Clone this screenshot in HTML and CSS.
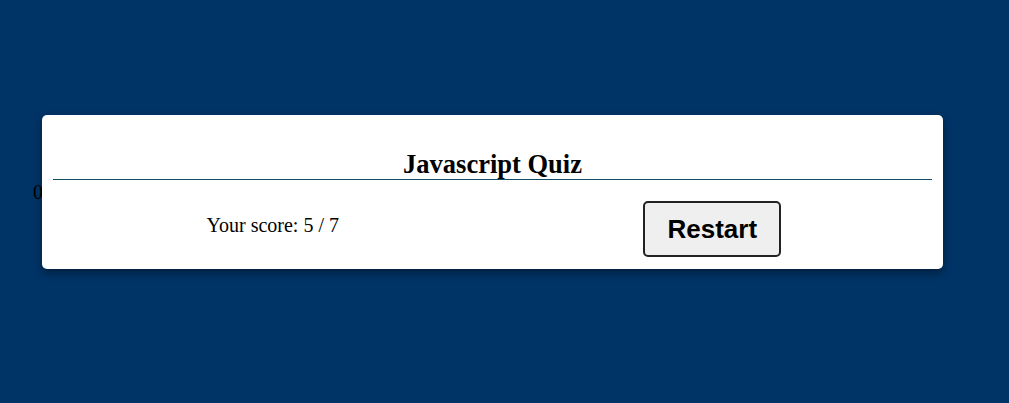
FILE: index.html
```html
<!DOCTYPE html>
<html lang="en">
<head>
<meta charset="utf-8">
<title>Javascript Quiz</title>
<link rel="stylesheet" href="styles.css">
</head>
<body>
<div class="page">
  <span class="counter">0</span>
  <div class="card">
    <h2 class="title">Javascript Quiz</h2>
    <div class="result-row">
      <div class="col">
        <p class="score">Your score: 5 / 7</p>
      </div>
      <div class="col">
        <button class="restart" type="button">Restart</button>
      </div>
    </div>
  </div>
</div>
</body>
</html>
```

FILE: styles.css
```css
html, body {
  margin: 0;
  padding: 0;
  background: #003366;
  font-family: "Liberation Serif", "Times New Roman", serif;
  color: #000;
}

.page {
  position: relative;
  width: 1009px;
  height: 403px;
  padding: 115px 0 0 42px;
  box-sizing: border-box;
}

.counter {
  position: absolute;
  left: 33px;
  top: 181px;
  font-size: 20px;
  line-height: 23px;
  color: #000;
}

.card {
  position: relative;
  z-index: 1;
  width: 901px;
  height: 154px;
  box-sizing: border-box;
  background: #fff;
  border-radius: 5px;
  padding: 15px 11px 11px;
  box-shadow: 0 4px 9px rgba(0, 0, 0, 0.4);
}

.title {
  margin: 19px 0 0;
  font-size: 26.5px;
  font-weight: bold;
  line-height: 30px;
  text-align: center;
  border-bottom: 1px solid #0f4d66;
}

.result-row {
  display: flex;
  align-items: flex-start;
}

.col {
  flex: 1;
  text-align: center;
}

.score {
  margin: 34px 0 0;
  font-size: 20px;
  line-height: 23px;
}

.restart {
  margin-top: 21px;
  font-family: "Liberation Sans", Arial, sans-serif;
  font-size: 26px;
  font-weight: bold;
  line-height: 30px;
  padding: 11px 22px;
  background: #efefef;
  border: 2px solid #222;
  border-radius: 5px;
  color: #000;
}
```
